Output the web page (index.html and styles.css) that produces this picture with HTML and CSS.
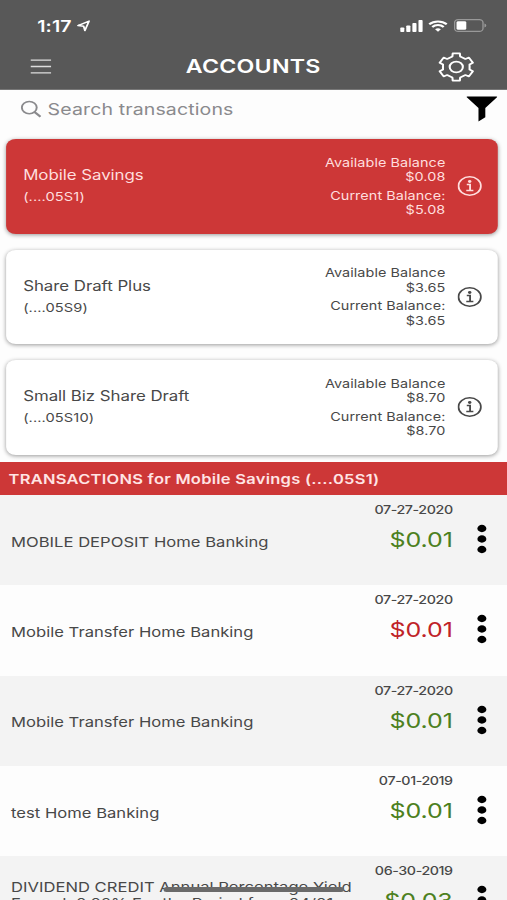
FILE: index.html
```html
<!DOCTYPE html>
<html>
<head>
<meta charset="utf-8">
<meta name="viewport" content="width=device-width, initial-scale=1.0">
<title>Accounts</title>
<link rel="stylesheet" href="styles.css">
</head>
<body>
	<svg class="defs" width="0" height="0">
		<symbol id="info" viewBox="0 0 20 20">
			<circle cx="10" cy="10" r="9.2" fill="none" stroke="currentColor" stroke-width="1.5"/>
			<circle cx="10" cy="5.5" r="1.4" fill="currentColor"/>
			<path d="M7.6 8.6h2.7v5.9M7.2 14.6h5.8" fill="none" stroke="currentColor" stroke-width="1.5"/>
		</symbol>
		<symbol id="dots" viewBox="0 0 8 30">
			<circle cx="4" cy="4.5" r="3.7"/>
			<circle cx="4" cy="15" r="3.7"/>
			<circle cx="4" cy="25.5" r="3.7"/>
		</symbol>
	</svg>
	<div id="screen">
		<div class="header">
			<div class="status">
				<span class="time">1:17</span>
				<svg class="arrow" width="11" height="12" viewBox="0 0 11 12"><path d="M.9 5.6 10 1.1 6.6 10.6 5.6 6.3z" fill="none" stroke="#fff" stroke-width="1.5" stroke-linejoin="round"/></svg>
				<svg class="signal" width="19" height="12" viewBox="0 0 19 12" fill="#fff">
					<rect x="0" y="7.5" width="3.4" height="4.5" rx=".8"/>
					<rect x="5" y="5.5" width="3.4" height="6.5" rx=".8"/>
					<rect x="10" y="3" width="3.4" height="9" rx=".8"/>
					<rect x="15" y="0" width="3.4" height="12" rx=".8"/>
				</svg>
				<svg class="wifi" width="16" height="12" viewBox="0 0 16 12" fill="none" stroke="#fff" stroke-width="2">
					<path d="M.8 4.3a10.4 10.4 0 0 1 14.4 0M3.3 7a6.8 6.8 0 0 1 9.4 0"/>
					<path d="M8 11.7 5.6 9.3a3.5 3.5 0 0 1 4.8 0z" fill="#fff" stroke="none"/>
				</svg>
				<svg class="battery" width="27" height="13" viewBox="0 0 27 13">
					<rect x=".6" y=".6" width="23.3" height="11.8" rx="3" fill="none" stroke="#999" stroke-width="1.1"/>
					<rect x="2.2" y="2.2" width="8" height="8.6" rx="1.4" fill="#fff"/>
					<path d="M25.1 4.5q1.5.6 1.5 2t-1.5 2z" fill="#999"/>
				</svg>
			</div>
			<div class="navbar">
				<svg class="menu" width="17" height="15" viewBox="0 0 17 15"><path d="M0 1.2h17M0 7.5h17M0 13.8h17" stroke="#ddd" stroke-width="1.3"/></svg>
				<h1>ACCOUNTS</h1>
				<svg class="gear" width="30" height="30" viewBox="0 0 30 30" fill="none" stroke="#fff" stroke-width="1.7" stroke-linejoin="round">
					<path d="M12.1 1.3 17.9 1.3 18.2 4.5 22.5 7 25.4 5.6 28.6 10.7 25.9 12.5 25.9 17.5 28.6 19.3 25.4 24.4 22.5 23 18.2 25.5 17.9 28.7 12.1 28.7 11.8 25.5 7.5 23 4.6 24.4 1.4 19.3 4.1 17.5 4.1 12.5 1.4 10.7 4.6 5.6 7.5 7 11.8 4.5z"/>
					<circle cx="15" cy="15" r="5.4"/>
				</svg>
			</div>
		</div>

		<div class="search">
			<svg width="17" height="18" viewBox="0 0 17 18" fill="none" stroke="#8a8a8d" stroke-width="1.6"><circle cx="7" cy="7.6" r="6.1"/><path d="M11.3 12 16.2 16.8" stroke-width="1.9"/></svg>
			<span class="placeholder">Search transactions</span>
			<svg class="filter" width="26" height="26" viewBox="0 0 26 26"><path d="M.4 1Q.4.4 1 .4h24q.6 0 .6.7L15.8 12v9.2L10.2 25.4V12z"/></svg>
		</div>

		<div class="accounts">
			<div class="card active">
				<div class="name">Mobile Savings<small>(....05S1)</small></div>
				<div class="balance"><p>Available Balance<br>$0.08</p><p>Current Balance:<br>$5.08</p></div>
				<svg class="info"><use href="#info"/></svg>
			</div>
			<div class="card">
				<div class="name">Share Draft Plus<small>(....05S9)</small></div>
				<div class="balance"><p>Available Balance<br>$3.65</p><p>Current Balance:<br>$3.65</p></div>
				<svg class="info"><use href="#info"/></svg>
			</div>
			<div class="card">
				<div class="name">Small Biz Share Draft<small>(....05S10)</small></div>
				<div class="balance"><p>Available Balance<br>$8.70</p><p>Current Balance:<br>$8.70</p></div>
				<svg class="info"><use href="#info"/></svg>
			</div>
		</div>

		<h2>TRANSACTIONS for Mobile Savings (....05S1)</h2>
		<ul class="list">
			<li>
				<div class="desc">MOBILE DEPOSIT Home Banking</div>
				<div class="sum"><span class="date">07-27-2020</span><span class="amount">$0.01</span></div>
				<svg class="dots"><use href="#dots"/></svg>
			</li>
			<li>
				<div class="desc">Mobile Transfer Home Banking</div>
				<div class="sum"><span class="date">07-27-2020</span><span class="amount debit">$0.01</span></div>
				<svg class="dots"><use href="#dots"/></svg>
			</li>
			<li>
				<div class="desc">Mobile Transfer Home Banking</div>
				<div class="sum"><span class="date">07-27-2020</span><span class="amount">$0.01</span></div>
				<svg class="dots"><use href="#dots"/></svg>
			</li>
			<li>
				<div class="desc">test Home Banking</div>
				<div class="sum"><span class="date">07-01-2019</span><span class="amount">$0.01</span></div>
				<svg class="dots"><use href="#dots"/></svg>
			</li>
			<li>
				<div class="desc">DIVIDEND CREDIT Annual Percentage Yield<br>Earned: 0.02% For the Period from 04/01</div>
				<div class="sum"><span class="date">06-30-2019</span><span class="amount">$0.03</span></div>
				<svg class="dots"><use href="#dots"/></svg>
			</li>
		</ul>
		<div class="home"></div>
	</div>
</body>
</html>
```

FILE: styles.css
```css
* {
	box-sizing: border-box;
}

html, body, h1, h2, ul, p {
	margin: 0;
	padding: 0;
}

body {
	height: 900px;
	overflow: hidden;
	background: #fdfdfd;
	color: #484848;
	font-family: Inter, "Liberation Sans", sans-serif;
}

svg {
	flex: none;
	display: block;
}

.defs {
	position: absolute;
}

/* the whole screen is drawn narrow and widened */
#screen {
	position: relative;
	width: 415.574px;
	height: 900px;
	overflow: hidden;
	transform: scaleX(1.22);
	transform-origin: 0 0;
}

.header {
	height: 89.5px;
	background: #585858;
	color: #fff;
	border-bottom: 1px solid #777;
}

.status {
	display: flex;
	align-items: center;
	height: 43px;
	padding: 8px 16.5px 0 30.5px;
}

.time {
	font-size: 16px;
	font-weight: 600;
	letter-spacing: .1px;
}

.arrow {
	margin-left: 4px;
}

.signal {
	margin-left: auto;
}

.wifi {
	margin: 0 5px 0 4.5px;
}

.navbar {
	display: flex;
	align-items: center;
	justify-content: space-between;
	height: 46px;
	padding: 1px 27px 0 25px;
}

h1 {
	margin: 0 0 0 14.5px;
	font-size: 19px;
	font-weight: 600;
	letter-spacing: .2px;
}

.search {
	display: flex;
	align-items: center;
	height: 49.5px;
	padding: 0 8px 10px 16.5px;
}

.placeholder {
	flex: 1;
	margin-left: 5.5px;
	font-size: 16px;
	color: #8a8a8d;
	letter-spacing: .1px;
}

.accounts {
	display: flex;
	flex-direction: column;
	gap: 16px;
	height: 323px;
	padding: 0 8px 0 4.5px;
}

.card {
	display: flex;
	align-items: center;
	height: 94.5px;
	padding: 0 12.5px 0 14.5px;
	background: #fff;
	border-radius: 8px;
	box-shadow: 0 1px 4px rgba(0,0,0,.4);
}

.card.active {
	background: #cd3737;
	color: #ffdede;
}

.name {
	flex: 1;
	font-size: 13.8px;
	line-height: 22px;
	letter-spacing: -.03px;
}

.name small {
	display: block;
	font-size: 12px;
	letter-spacing: .08px;
}

.balance {
	padding-top: 1px;
	text-align: right;
	font-size: 11.8px;
	line-height: 14.5px;
	letter-spacing: .07px;
}

.balance p + p {
	margin-top: 4px;
}

.info {
	width: 20px;
	height: 20px;
	margin-left: 10px;
}

h2 {
	height: 33px;
	padding-left: 7px;
	background: #cd3737;
	color: #ffe4e4;
	font-size: 13.5px;
	line-height: 34px;
	font-weight: 600;
	letter-spacing: .22px;
}

.list {
	list-style: none;
}

.list li {
	display: flex;
	height: 90.3px;
	padding: 0 17px 0 9px;
	background: #fdfdfd;
}

.list li:nth-child(odd) {
	background: #f3f3f3;
}

.desc {
	flex: 1;
	height: 49.5px;
	margin-top: 22.7px;
	font-size: 13.6px;
	line-height: 16.5px;
	white-space: nowrap;
	letter-spacing: .02px;
}

.list li:not(:last-child) .desc {
	line-height: 49.5px;
}

.sum {
	display: flex;
	flex-direction: column;
	align-items: flex-end;
	padding-top: 8px;
	white-space: nowrap;
}

.date {
	font-size: 11.7px;
	line-height: 15px;
	font-weight: 500;
	letter-spacing: -.33px;
}

.amount {
	margin-top: 7px;
	font-size: 20.5px;
	line-height: 30px;
	color: #4c8020;
	letter-spacing: -.1px;
}

.debit {
	color: #c02328;
}

.dots {
	width: 8px;
	height: 30px;
	margin: 29px 0 0 19.5px;
	fill: #000;
}

.home {
	position: absolute;
	left: 134px;
	top: 886.5px;
	width: 148px;
	height: 5px;
	border-radius: 3px;
	background: #6a6a6a;
}
```
